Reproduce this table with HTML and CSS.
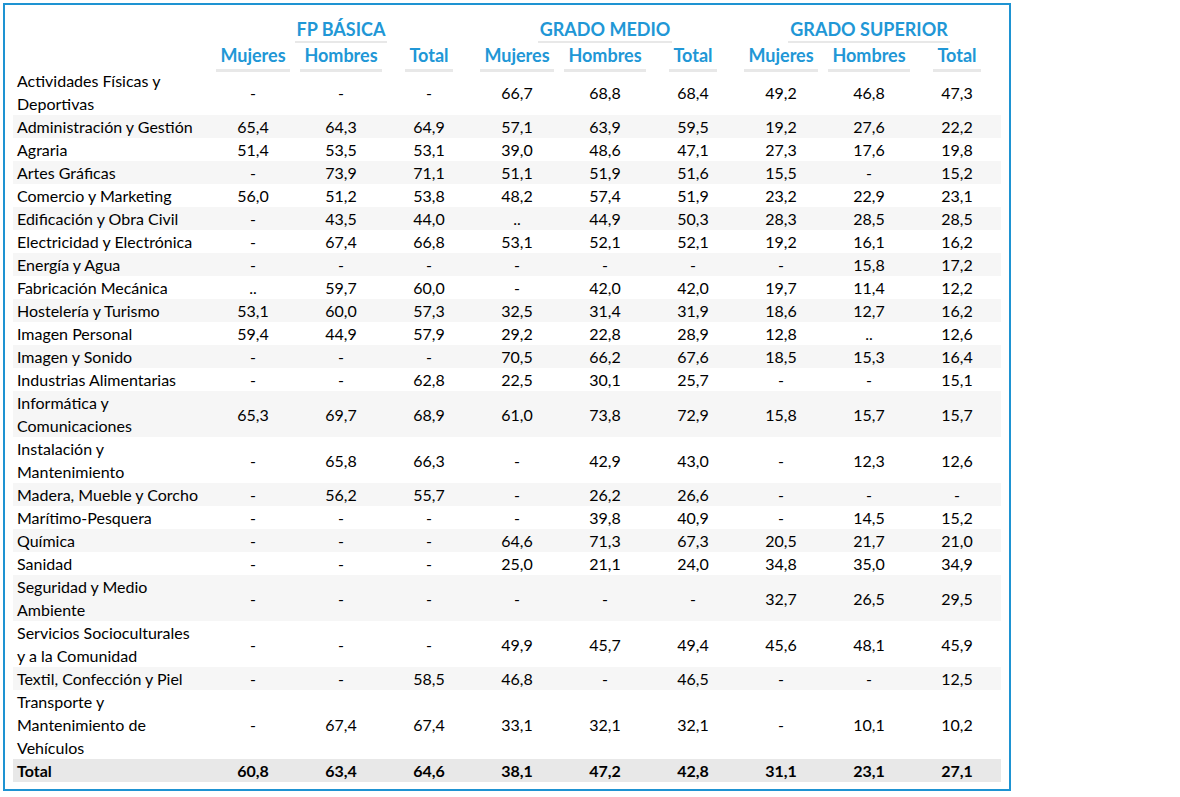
FILE: index.html
```html
<!DOCTYPE html>
<html lang="es">
<head>
<meta charset="utf-8">
<title>Tasa de inserción por familia profesional</title>
<link rel="stylesheet" href="styles.css">
</head>
<body>
<div class="frame">
<table class="data">
<colgroup>
<col class="c-label">
<col class="c-num"><col class="c-num"><col class="c-num">
<col class="c-num"><col class="c-num"><col class="c-num">
<col class="c-num"><col class="c-num"><col class="c-num">
</colgroup>
<thead>
<tr class="groups">
<th></th>
<th colspan="3"><span class="hd">FP BÁSICA</span></th>
<th colspan="3"><span class="hd">GRADO MEDIO</span></th>
<th colspan="3"><span class="hd">GRADO SUPERIOR</span></th>
</tr>
<tr class="cols">
<th></th>
<th><span class="hd">Mujeres</span></th><th><span class="hd">Hombres</span></th><th><span class="hd">Total</span></th>
<th><span class="hd">Mujeres</span></th><th><span class="hd">Hombres</span></th><th><span class="hd">Total</span></th>
<th><span class="hd">Mujeres</span></th><th><span class="hd">Hombres</span></th><th><span class="hd">Total</span></th>
</tr>
</thead>
<tbody>
<tr><td>Actividades Físicas y<br>Deportivas</td><td>-</td><td>-</td><td>-</td><td>66,7</td><td>68,8</td><td>68,4</td><td>49,2</td><td>46,8</td><td>47,3</td></tr>
<tr><td>Administración y Gestión</td><td>65,4</td><td>64,3</td><td>64,9</td><td>57,1</td><td>63,9</td><td>59,5</td><td>19,2</td><td>27,6</td><td>22,2</td></tr>
<tr><td>Agraria</td><td>51,4</td><td>53,5</td><td>53,1</td><td>39,0</td><td>48,6</td><td>47,1</td><td>27,3</td><td>17,6</td><td>19,8</td></tr>
<tr><td>Artes Gráficas</td><td>-</td><td>73,9</td><td>71,1</td><td>51,1</td><td>51,9</td><td>51,6</td><td>15,5</td><td>-</td><td>15,2</td></tr>
<tr><td>Comercio y Marketing</td><td>56,0</td><td>51,2</td><td>53,8</td><td>48,2</td><td>57,4</td><td>51,9</td><td>23,2</td><td>22,9</td><td>23,1</td></tr>
<tr><td>Edificación y Obra Civil</td><td>-</td><td>43,5</td><td>44,0</td><td>..</td><td>44,9</td><td>50,3</td><td>28,3</td><td>28,5</td><td>28,5</td></tr>
<tr><td>Electricidad y Electrónica</td><td>-</td><td>67,4</td><td>66,8</td><td>53,1</td><td>52,1</td><td>52,1</td><td>19,2</td><td>16,1</td><td>16,2</td></tr>
<tr><td>Energía y Agua</td><td>-</td><td>-</td><td>-</td><td>-</td><td>-</td><td>-</td><td>-</td><td>15,8</td><td>17,2</td></tr>
<tr><td>Fabricación Mecánica</td><td>..</td><td>59,7</td><td>60,0</td><td>-</td><td>42,0</td><td>42,0</td><td>19,7</td><td>11,4</td><td>12,2</td></tr>
<tr><td>Hostelería y Turismo</td><td>53,1</td><td>60,0</td><td>57,3</td><td>32,5</td><td>31,4</td><td>31,9</td><td>18,6</td><td>12,7</td><td>16,2</td></tr>
<tr><td>Imagen Personal</td><td>59,4</td><td>44,9</td><td>57,9</td><td>29,2</td><td>22,8</td><td>28,9</td><td>12,8</td><td>..</td><td>12,6</td></tr>
<tr><td>Imagen y Sonido</td><td>-</td><td>-</td><td>-</td><td>70,5</td><td>66,2</td><td>67,6</td><td>18,5</td><td>15,3</td><td>16,4</td></tr>
<tr><td>Industrias Alimentarias</td><td>-</td><td>-</td><td>62,8</td><td>22,5</td><td>30,1</td><td>25,7</td><td>-</td><td>-</td><td>15,1</td></tr>
<tr><td>Informática y<br>Comunicaciones</td><td>65,3</td><td>69,7</td><td>68,9</td><td>61,0</td><td>73,8</td><td>72,9</td><td>15,8</td><td>15,7</td><td>15,7</td></tr>
<tr><td>Instalación y<br>Mantenimiento</td><td>-</td><td>65,8</td><td>66,3</td><td>-</td><td>42,9</td><td>43,0</td><td>-</td><td>12,3</td><td>12,6</td></tr>
<tr><td>Madera, Mueble y Corcho</td><td>-</td><td>56,2</td><td>55,7</td><td>-</td><td>26,2</td><td>26,6</td><td>-</td><td>-</td><td>-</td></tr>
<tr><td>Marítimo-Pesquera</td><td>-</td><td>-</td><td>-</td><td>-</td><td>39,8</td><td>40,9</td><td>-</td><td>14,5</td><td>15,2</td></tr>
<tr><td>Química</td><td>-</td><td>-</td><td>-</td><td>64,6</td><td>71,3</td><td>67,3</td><td>20,5</td><td>21,7</td><td>21,0</td></tr>
<tr><td>Sanidad</td><td>-</td><td>-</td><td>-</td><td>25,0</td><td>21,1</td><td>24,0</td><td>34,8</td><td>35,0</td><td>34,9</td></tr>
<tr><td>Seguridad y Medio<br>Ambiente</td><td>-</td><td>-</td><td>-</td><td>-</td><td>-</td><td>-</td><td>32,7</td><td>26,5</td><td>29,5</td></tr>
<tr><td>Servicios Socioculturales<br>y a la Comunidad</td><td>-</td><td>-</td><td>-</td><td>49,9</td><td>45,7</td><td>49,4</td><td>45,6</td><td>48,1</td><td>45,9</td></tr>
<tr><td>Textil, Confección y Piel</td><td>-</td><td>-</td><td>58,5</td><td>46,8</td><td>-</td><td>46,5</td><td>-</td><td>-</td><td>12,5</td></tr>
<tr><td>Transporte y<br>Mantenimiento de<br>Vehículos</td><td>-</td><td>67,4</td><td>67,4</td><td>33,1</td><td>32,1</td><td>32,1</td><td>-</td><td>10,1</td><td>10,2</td></tr>
</tbody>
<tfoot>
<tr class="total"><td>Total</td><td>60,8</td><td>63,4</td><td>64,6</td><td>38,1</td><td>47,2</td><td>42,8</td><td>31,1</td><td>23,1</td><td>27,1</td></tr>
</tfoot>
</table>
</div>
</body>
</html>
```
FILE: styles.css
```css
html, body {
  margin: 0;
  padding: 0;
  background: #ffffff;
}

body {
  font-family: Lato, "Open Sans", "Liberation Sans", sans-serif;
  color: #000000;
}

.frame {
  box-sizing: border-box;
  width: 1008px;
  margin: 3px 0 0 3px;
  border: 2px solid #1e93d2;
  padding: 0 7px 7px 8px;
}

.data {
  table-layout: fixed;
  width: 988px;
  border-collapse: collapse;
  border-spacing: 0;
}

.c-label { width: 196px; }
.c-num { width: 88px; }

.data th,
.data td {
  padding: 0;
}

.data th {
  font-weight: 700;
  font-size: 18px;
  color: #2197d6;
  text-align: center;
  vertical-align: bottom;
  white-space: nowrap;
}

.hd {
  display: inline-block;
  line-height: 22px;
}

.groups th {
  height: 38px;
}

.groups .hd {
  padding: 0 2px 1px;
  border-bottom: 2px solid #e8e8e8;
}

.cols th {
  height: 26px;
}

.cols .hd {
  padding: 0 4px 3px;
  box-shadow: 0 3px 0 #e8e8e8;
}

.data td {
  font-size: 16px;
  line-height: 23px;
  text-align: center;
  vertical-align: middle;
  white-space: nowrap;
}

.data td:first-child {
  text-align: left;
  padding-left: 4px;
}

.data tbody tr:nth-child(even) td {
  background: #f6f6f6;
}

.total td {
  background: #e8e8e8;
  font-weight: 700;
}
```
